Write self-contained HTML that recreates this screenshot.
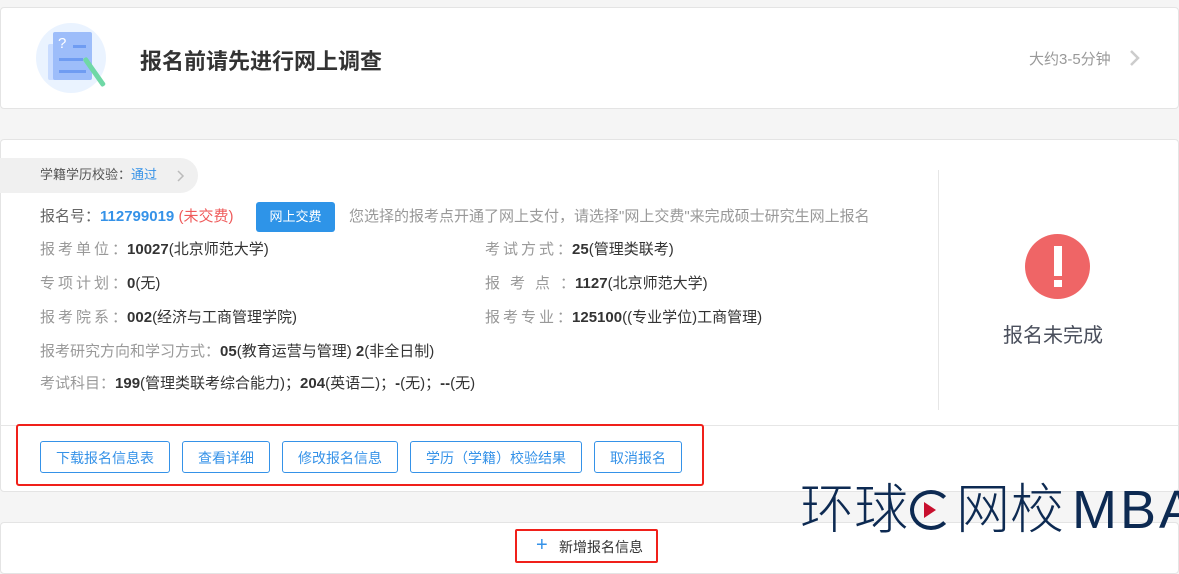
<!DOCTYPE html><html><head><meta charset="utf-8"><style>
body{margin:0;width:1179px;height:573px;background:#f5f5f5;font-family:"Liberation Sans","Noto Sans CJK SC",sans-serif;position:relative;overflow:hidden}
.abs{position:absolute}
.card{position:absolute;background:#fff;border:1px solid #e4e4e4;border-radius:4px}
.lbl{color:#999}
.v{color:#333}
.v b{font-weight:bold}
.row{position:absolute;font-size:15px;white-space:nowrap;line-height:20px}
.btn{position:absolute;top:441px;height:32px;border:1px solid #3592e8;border-radius:3px;color:#3592e8;font-size:14px;line-height:32px;text-align:center;box-sizing:border-box;background:#fff}
</style></head><body>
<div class="card" style="left:0;top:7px;width:1177px;height:100px"></div>
<div class="abs" style="left:36px;top:23px;width:70px;height:70px;border-radius:50%;background:#eaf3ff"></div>
<div class="abs" style="left:48px;top:44px;width:30px;height:36px;background:#c9dcff;border-radius:2px"></div>
<div class="abs" style="left:53px;top:32px;width:39px;height:48px;background:#9dbdfa;border-radius:2px"></div>
<div class="abs" style="left:58px;top:35px;color:#fff;font-size:15px">?</div>
<div class="abs" style="left:73px;top:45px;width:13px;height:3px;background:#6f9cf2"></div>
<div class="abs" style="left:59px;top:58px;width:24px;height:3px;background:#6f9cf2"></div>
<div class="abs" style="left:59px;top:70px;width:27px;height:3px;background:#6f9cf2"></div>
<div class="abs" style="left:82px;top:58px;width:5px;height:34px;background:#6fd8a6;transform:rotate(-35deg);transform-origin:top;border-radius:2px"></div>
<div class="abs" style="left:140px;top:44px;font-size:22px;font-weight:bold;color:#333">报名前请先进行网上调查</div>
<div class="abs" style="left:1029px;top:48px;font-size:15px;color:#999">大约3-5分钟</div>
<svg class="abs" style="left:1128px;top:48px" width="14" height="20"><path d="M3 3l7 7-7 7" stroke="#ccc" stroke-width="2.5" fill="none"/></svg>

<div class="card" style="left:0;top:139px;width:1177px;height:351px"></div>
<div class="abs" style="left:938px;top:170px;width:1px;height:240px;background:#e6e6e6"></div>
<div class="abs" style="left:0;top:425px;width:1178px;height:1px;background:#e6e6e6"></div>
<div class="abs" style="left:0;top:158px;width:198px;height:35px;background:#f0f0f0;border-radius:0 18px 18px 0"></div>
<div class="row" style="left:40px;top:165px;font-size:13px;color:#555">学籍学历校验：<span style="color:#3592e8">通过</span></div>
<svg class="abs" style="left:176px;top:169px" width="10" height="14"><path d="M2 2l5 5-5 5" stroke="#bbb" stroke-width="1.5" fill="none"/></svg>
<div class="row" style="left:40px;top:207px"><span class="lbl" style="color:#666">报名号：</span><b style="color:#3592e8">112799019</b> <span style="color:#ef5b5b">(未交费)</span></div>
<div class="abs" style="left:256px;top:202px;width:79px;height:30px;background:#2e94e8;border-radius:3px;color:#fff;font-size:13px;line-height:30px;text-align:center">网上交费</div>
<div class="row" style="left:349px;top:207px;color:#999">您选择的报考点开通了网上支付，请选择"网上交费"来完成硕士研究生网上报名</div>
<div class="row" style="left:40px;top:240px"><span class="lbl" style="letter-spacing:3px">报考单位</span><span class="lbl">：</span><span class="v"><b>10027</b>(北京师范大学)</span></div>
<div class="row" style="left:40px;top:274px"><span class="lbl" style="letter-spacing:3px">专项计划</span><span class="lbl">：</span><span class="v"><b>0</b>(无)</span></div>
<div class="row" style="left:40px;top:308px"><span class="lbl" style="letter-spacing:3px">报考院系</span><span class="lbl">：</span><span class="v"><b>002</b>(经济与工商管理学院)</span></div>
<div class="row" style="left:40px;top:342px"><span class="lbl">报考研究方向和学习方式：</span><span class="v"><b>05</b>(教育运营与管理) <b>2</b>(非全日制)</span></div>
<div class="row" style="left:40px;top:374px"><span class="lbl">考试科目：</span><span class="v"><b>199</b>(管理类联考综合能力)；<b>204</b>(英语二)；<b>-</b>(无)；<b>--</b>(无)</span></div>
<div class="row" style="left:485px;top:240px"><span class="lbl" style="letter-spacing:3px">考试方式</span><span class="lbl">：</span><span class="v"><b>25</b>(管理类联考)</span></div>
<div class="row" style="left:485px;top:274px"><span class="lbl" style="letter-spacing:10px">报考点</span><span class="lbl">：</span><span class="v"><b>1127</b>(北京师范大学)</span></div>
<div class="row" style="left:485px;top:308px"><span class="lbl" style="letter-spacing:3px">报考专业</span><span class="lbl">：</span><span class="v"><b>125100</b>((专业学位)工商管理)</span></div>
<div class="abs" style="left:1025px;top:234px;width:65px;height:65px;border-radius:50%;background:#ef6566"></div>
<div class="abs" style="left:1054px;top:246px;width:8px;height:30px;background:#fff"></div>
<div class="abs" style="left:1054px;top:280px;width:8px;height:7px;background:#fff"></div>
<div class="abs" style="left:1003px;top:319px;font-size:20px;color:#4a4f5c">报名未完成</div>

<div class="abs" style="left:16px;top:424px;width:684px;height:58px;border:2px solid #f0201a;border-radius:3px"></div>
<div class="btn" style="left:40px;width:130px">下载报名信息表</div>
<div class="btn" style="left:182px;width:88px">查看详细</div>
<div class="btn" style="left:282px;width:116px">修改报名信息</div>
<div class="btn" style="left:410px;width:172px">学历（学籍）校验结果</div>
<div class="btn" style="left:594px;width:88px">取消报名</div>

<div class="card" style="left:0;top:522px;width:1177px;height:50px"></div>
<div class="abs" style="left:515px;top:529px;width:139px;height:30px;border:2px solid #f0201a;border-radius:2px"></div>
<div class="abs" style="left:536px;top:535px;font-size:20px;color:#3592e8;line-height:20px">+</div>
<div class="abs" style="left:559px;top:537px;font-size:14px;color:#333">新增报名信息</div>
<div class="abs" style="left:800px;top:479px;font-size:54px;font-weight:300;color:#0d2a52;white-space:nowrap;line-height:62px">环球<span style="display:inline-block;width:48px;height:50px;vertical-align:-4px;position:relative"><span style="position:absolute;left:2px;top:8px;width:42px;height:40px;border:4px solid #0d2a52;border-radius:50%;box-sizing:border-box;border-right-color:transparent"></span><span style="position:absolute;left:16px;top:20px;width:0;height:0;border-left:12px solid #c8102e;border-top:8px solid transparent;border-bottom:8px solid transparent"></span></span>网校<span style="margin-left:8px;letter-spacing:3px">MBA</span></div>
</body></html>
